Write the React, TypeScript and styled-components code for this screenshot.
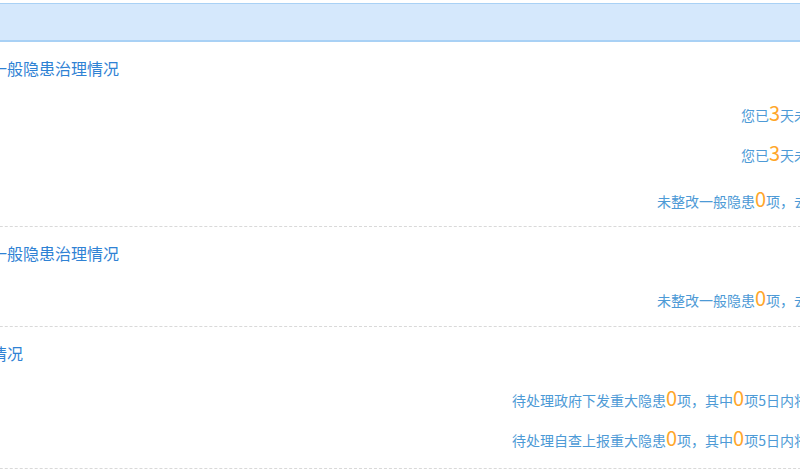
import React from "react";
import styled, { createGlobalStyle } from "styled-components";

const GlobalStyle = createGlobalStyle`
  html, body {
    margin: 0;
    padding: 0;
    background: #fff;
    overflow: hidden;
  }
  body {
    font-family: "Noto Sans CJK SC", "Noto Sans", sans-serif;
  }
`;

const Viewport = styled.div`
  width: 800px;
  height: 476px;
  overflow: hidden;
`;

// the page is wider than the window, it is scrolled a bit to the right
const Page = styled.div`
  width: 941px;
  margin-left: -105px;
  padding-top: 3px;
`;

const HeadBar = styled.div`
  height: 36px;
  background-color: #d5e8fc;
  border-top: 1px solid #a9d1f5;
  border-bottom: 2px solid #a9d1f5;
  border-left: 2px solid #e6f1fe;
`;

const Section = styled.div<{ $padBottom: number }>`
  padding: 11px 0 ${({ $padBottom }) => $padBottom}px;
  border-bottom: 1px dashed #d9d9d9;
`;

const Title = styled.h3`
  margin: 0;
  height: 30px;
  font-size: 16px;
  font-weight: 400;
  line-height: 30px;
  color: #2f82d4;
  white-space: nowrap;
`;

const Rows = styled.div`
  margin-top: 12px;
  display: flex;
  flex-direction: column;
  gap: 6px;
`;

const Group = styled.div`
  display: flex;
  flex-direction: column;
`;

const Row = styled.p`
  margin: 0;
  height: 40px;
  line-height: 40px;
  text-align: right;
  font-size: 14px;
  color: #4d9ad6;
  white-space: nowrap;
`;

const Num = styled.span`
  font-size: 20px;
  line-height: 20px;
  color: #ffa629;
`;

type Part = string | number;

interface ISection {
  title: string;
  padBottom: number;
  groups: Part[][][];
}

const sections: ISection[] = [
  {
    title: "本月企业自查一般隐患治理情况",
    padBottom: 5,
    groups: [
      [
        ["您已", 3, "天未登录"],
        ["您已", 3, "天未巡查"],
      ],
      [["未整改一般隐患", 0, "项，去整改"]],
    ],
  },
  {
    title: "本月政府督办一般隐患治理情况",
    padBottom: 6,
    groups: [[["未整改一般隐患", 0, "项，去整改"]]],
  },
  {
    title: "重大隐患治理情况",
    padBottom: 8,
    groups: [
      [
        ["待处理政府下发重大隐患", 0, "项，其中", 0, "项5日内将到期"],
        ["待处理自查上报重大隐患", 0, "项，其中", 0, "项5日内将到期"],
      ],
    ],
  },
];

const App = () => {
  return (
    <Viewport>
      <GlobalStyle />
      <Page>
        <HeadBar />
        {sections.map((section, i) => (
          <Section key={i} $padBottom={section.padBottom}>
            <Title>{section.title}</Title>
            <Rows>
              {section.groups.map((group, g) => (
                <Group key={g}>
                  {group.map((parts, r) => (
                    <Row key={r}>
                      {parts.map((part, p) =>
                        typeof part === "number" ? (
                          <Num key={p}>{part}</Num>
                        ) : (
                          <React.Fragment key={p}>{part}</React.Fragment>
                        )
                      )}
                    </Row>
                  ))}
                </Group>
              ))}
            </Rows>
          </Section>
        ))}
      </Page>
    </Viewport>
  );
};

export default App;
